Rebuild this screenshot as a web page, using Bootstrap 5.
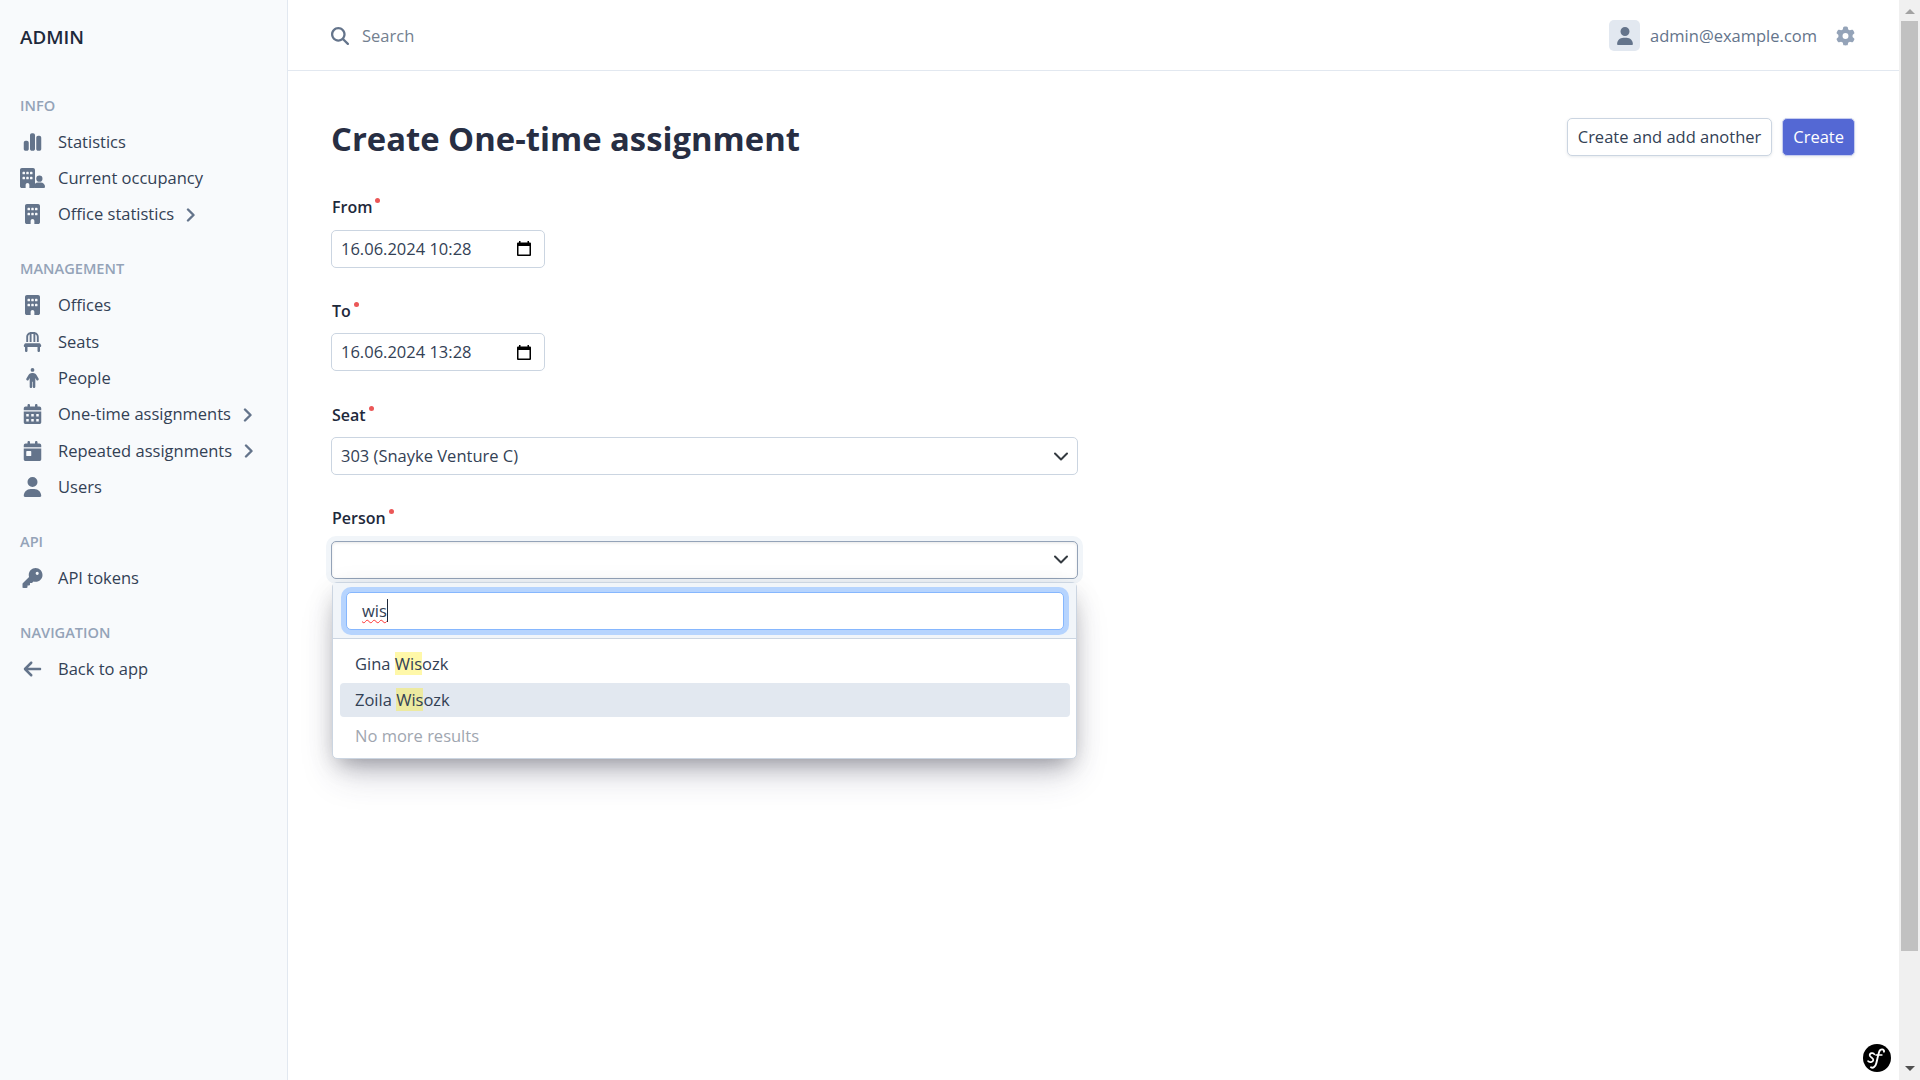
<!DOCTYPE html>
<html lang="en">
<head>
<meta charset="utf-8">
<meta name="viewport" content="width=device-width, initial-scale=1">
<title>Create One-time assignment</title>
<link rel="stylesheet" href="https://cdn.jsdelivr.net/npm/bootstrap@5.3.0/dist/css/bootstrap.min.css">
<style>
  html, body { height: 100%; overflow: hidden; }
  body { font-family: "Open Sans", "Noto Sans", sans-serif; font-size: 16.5px; line-height: 24px; color: #334155; background: #fff; }
  svg { display: block; flex: none; }
  .fa-ico { height: 20px; width: 25px; fill: #64748b; }
  .side { width: 288px; background: #f8fafc; border-right: 1px solid #e2e8f0; }
  .brand { height: 69px; padding: 5px 20px 0; font-size: 18.8px; font-weight: 600; color: #1e293b; }
  .side-head { height: 54.4px; padding: 17px 20px 0; font-size: 14.6px; font-weight: 600; color: #94a3b8; }
  .side-link { height: 36.4px; padding: 0 20px; color: #334155; text-decoration: none; }
  .side-link .lbl { margin-left: 13px; }
  .side-link .chev { width: 9px; height: 14px; margin: 1px 0 0 12px; fill: none; stroke: #64748b; stroke-width: 2.4; stroke-linecap: round; stroke-linejoin: round; }
  .topbar { height: 71px; border-bottom: 1px solid #e2e8f0; padding: 1px 44px 0 43px; color: #64748b; }
  .search-ph { margin-left: 13px; color: #73808f; }
  .mail { margin: 0 19px 0 10px; }
  .avatar { width: 31px; height: 31px; background: #e2e8f0; border-radius: 5px; }
  .page-body { padding: 47px 44px 0 43px; }
  .page-title { font-size: 32.8px; line-height: 42px; font-weight: 700; color: #272e43; }
  .btn-ea { height: 38px; padding: 0 10px; font-size: 16.5px; line-height: 36px; border-radius: 5px; box-shadow: 0 1px 3px rgba(100,116,139,.16); border: 1px solid #cbd5e1; color: #334155; background: #fff; }
  .btn-main { margin-left: 10px; background: #5468d4; color: #fff; border-color: #c6cdf0; }
  .ea-form { padding-top: 35px; }
  .fld { height: 103.75px; width: 747px; }
  .fld-label { height: 34.7px; padding-left: 1px; line-height: 24px; font-weight: 600; font-size: 16px; color: #1e293b; }
  .req { width: 5px; height: 5px; border-radius: 50%; background: #eb5757; margin: 3px 0 0 3px; }
  .ctl { height: 38px; border: 1px solid #cbd5e1; border-radius: 5px; padding: 0 9px; background: #fff; }
  .ctl-date { width: 214px; padding-right: 13px; }
  .ctl-open { border-color: #94a3b8; box-shadow: 0 0 0 5px #f1f5f9, inset 0 1px 3px rgba(0,0,0,.1); }
  .caret-dn { width: 14px; height: 9px; fill: none; stroke: #343a40; stroke-width: 2; stroke-linecap: round; stroke-linejoin: round; }
  .drop { top: 75.6px; left: 1px; width: 745px; height: 177px; border: 1px solid #cbd5e1; border-radius: 5px; background: #fff; box-shadow: 0 20px 34px -6px rgba(50,50,93,.22), 0 10px 20px -8px rgba(0,0,0,.3), 0 6px 30px rgba(0,0,0,.07); }
  .drop-top { height: 56px; background: #f1f5f9; border-bottom: 1px solid #cbd5e1; padding: 9px 12px 0 13px; }
  .drop-in { height: 38px; border: 1px solid #86b7fe; border-radius: 5px; background: #fff; box-shadow: 0 0 0 5px #b6d4fe; padding: 0 15px; }
  .spell { text-decoration: underline wavy #f33 1px; text-underline-offset: 2px; text-decoration-skip-ink: none; }
  .txt-caret { width: 1px; height: 23px; background: #1e293b; }
  .opt { height: 34px; margin: 2.4px 6px 0 7px; padding: 0 15px; border-radius: 4px; }
  .opt-first { margin-top: 8px; }
  .opt.sel { background: #e2e8f0; }
  .opt-end { margin-top: 1.6px; color: #a0a6b0; }
  .hl { background: rgba(255,237,40,.4); padding: 0; color: inherit; }
  .scr { width: 21px; background: #f0f0f0; }
  .scr-thumb { width: 17px; height: 930px; background: #c1c1c1; }
  .sf-mark { right: 8px; bottom: 8px; }
</style>
<script src="https://cdn.jsdelivr.net/npm/bootstrap@5.3.0/dist/js/bootstrap.bundle.min.js"></script>
</head>
<body class="d-flex">
<svg width="0" height="0" class="position-absolute">
  <symbol id="i-user" viewBox="0 0 448 512"><path d="M224 256A128 128 0 1 0 224 0a128 128 0 1 0 0 256zm-45.700 48C79.800 304 0 383.800 0 482.300C0 498.700 13.300 512 29.700 512H418.300c16.400 0 29.700-13.300 29.700-29.700C448 383.800 368.200 304 269.700 304H178.300z"/></symbol>
  <symbol id="i-building" viewBox="0 0 384 512"><path fill-rule="evenodd" d="M48 0h288c26.500 0 48 21.500 48 48v416c0 26.500-21.500 48-48 48h-96v-80c0-26.500-21.500-48-48-48s-48 21.500-48 48v80H48c-26.500 0-48-21.500-48-48V48C0 21.500 21.500 0 48 0zM80 96c-9 0-16 7-16 16v32c0 9 7 16 16 16h32c9 0 16-7 16-16v-32c0-9-7-16-16-16zM176 96c-9 0-16 7-16 16v32c0 9 7 16 16 16h32c9 0 16-7 16-16v-32c0-9-7-16-16-16zM272 96c-9 0-16 7-16 16v32c0 9 7 16 16 16h32c9 0 16-7 16-16v-32c0-9-7-16-16-16zM80 224c-9 0-16 7-16 16v32c0 9 7 16 16 16h32c9 0 16-7 16-16v-32c0-9-7-16-16-16zM176 224c-9 0-16 7-16 16v32c0 9 7 16 16 16h32c9 0 16-7 16-16v-32c0-9-7-16-16-16zM272 224c-9 0-16 7-16 16v32c0 9 7 16 16 16h32c9 0 16-7 16-16v-32c0-9-7-16-16-16z"/></symbol>
</svg>

<nav class="side d-flex flex-column flex-shrink-0 h-100">
  <div class="brand d-flex align-items-center"><span>ADMIN</span></div>
  <div class="side-head d-flex align-items-center"><span>INFO</span></div>
  <a href="#" class="side-link d-flex align-items-center"><svg class="fa-ico" viewBox="0 0 448 512"><path d="M160 80c0-26.500 21.500-48 48-48h32c26.500 0 48 21.500 48 48V432c0 26.500-21.500 48-48 48H208c-26.500 0-48-21.500-48-48V80zM0 272c0-26.500 21.500-48 48-48H80c26.500 0 48 21.500 48 48V432c0 26.500-21.500 48-48 48H48c-26.500 0-48-21.500-48-48V272zM368 96h32c26.500 0 48 21.500 48 48V432c0 26.500-21.500 48-48 48H368c-26.500 0-48-21.500-48-48V144c0-26.500 21.500-48 48-48z"/></svg><span class="lbl">Statistics</span></a>
  <a href="#" class="side-link d-flex align-items-center"><svg class="fa-ico" viewBox="0 0 640 512"><use href="#i-building" width="384" height="512"/><circle cx="496" cy="272" r="80"/><path d="M352 477c0-61 50-109 109-109h70c60 0 109 48 109 109 0 19-16 35-35 35H387c-19 0-35-16-35-35z"/></svg><span class="lbl">Current occupancy</span></a>
  <a href="#" class="side-link d-flex align-items-center"><svg class="fa-ico"><use href="#i-building"/></svg><span class="lbl">Office statistics</span><svg class="chev" viewBox="0 0 9 14"><path d="M2 1.500l5.500 5.500-5.500 5.500"/></svg></a>
  <div class="side-head d-flex align-items-center"><span>MANAGEMENT</span></div>
  <a href="#" class="side-link d-flex align-items-center"><svg class="fa-ico"><use href="#i-building"/></svg><span class="lbl">Offices</span></a>
  <a href="#" class="side-link d-flex align-items-center"><svg class="fa-ico" viewBox="0 0 448 512"><path d="M248 48V256h48V58.700c23.900 13.800 40 39.700 40 69.300V256h48V128C384 57.300 326.700 0 256 0H192C121.300 0 64 57.300 64 128V256h48V128c0-29.600 16.100-55.500 40-69.300V256h48V48h48zM48 288c-12.100 0-23.200 6.800-28.600 17.700l-16 32c-5 9.900-4.400 21.700 1.400 31.100S20.900 384 32 384l0 96c0 17.700 14.300 32 32 32s32-14.300 32-32V384H352v96c0 17.700 14.300 32 32 32s32-14.300 32-32V384c11.100 0 21.400-5.700 27.200-15.200s6.400-21.200 1.400-31.100l-16-32C423.200 294.800 412.100 288 400 288H48z"/></svg><span class="lbl">Seats</span></a>
  <a href="#" class="side-link d-flex align-items-center"><svg class="fa-ico" viewBox="0 0 320 512"><path d="M112 48a48 48 0 1 1 96 0 48 48 0 1 1 -96 0zm40 304V480c0 17.700-14.300 32-32 32s-32-14.300-32-32V256.900L59.400 304.500c-9.100 15.100-28.800 20-43.900 10.900s-20-28.800-10.900-43.900l58.300-97c17.400-28.900 48.600-46.600 82.300-46.600h29.700c33.700 0 64.900 17.700 82.300 46.600l58.300 97c9.100 15.100 4.200 34.800-10.900 43.900s-34.800 4.200-43.900-10.900L232 256.900V480c0 17.700-14.300 32-32 32s-32-14.300-32-32V352H152z"/></svg><span class="lbl">People</span></a>
  <a href="#" class="side-link d-flex align-items-center"><svg class="fa-ico" viewBox="0 0 448 512"><path fill-rule="evenodd" d="M128 0c17.700 0 32 14.300 32 32V64H288V32c0-17.700 14.300-32 32-32s32 14.300 32 32V64h48c26.500 0 48 21.500 48 48v48H0V112C0 85.500 21.500 64 48 64H96V32c0-17.700 14.300-32 32-32zM0 192H448V464c0 26.500-21.500 48-48 48H48c-26.500 0-48-21.500-48-48V192zM64 256v64h64v-64zM192 256v64h64v-64zM320 256v64h64v-64zM64 384v64h64v-64zM192 384v64h64v-64zM320 384v64h64v-64z"/></svg><span class="lbl">One-time assignments</span><svg class="chev" viewBox="0 0 9 14"><path d="M2 1.500l5.500 5.500-5.500 5.500"/></svg></a>
  <a href="#" class="side-link d-flex align-items-center"><svg class="fa-ico" viewBox="0 0 448 512"><path fill-rule="evenodd" d="M128 0c17.700 0 32 14.300 32 32V64H288V32c0-17.700 14.300-32 32-32s32 14.300 32 32V64h48c26.500 0 48 21.500 48 48v48H0V112C0 85.500 21.500 64 48 64H96V32c0-17.700 14.300-32 32-32zM0 192H448V464c0 26.500-21.500 48-48 48H48c-26.500 0-48-21.500-48-48V192zM80 256c-8.800 0-16 7.200-16 16v96c0 8.800 7.200 16 16 16h96c8.800 0 16-7.200 16-16V272c0-8.800-7.200-16-16-16H80z"/></svg><span class="lbl">Repeated assignments</span><svg class="chev" viewBox="0 0 9 14"><path d="M2 1.500l5.500 5.500-5.500 5.500"/></svg></a>
  <a href="#" class="side-link d-flex align-items-center"><svg class="fa-ico"><use href="#i-user"/></svg><span class="lbl">Users</span></a>
  <div class="side-head d-flex align-items-center"><span>API</span></div>
  <a href="#" class="side-link d-flex align-items-center"><svg class="fa-ico" viewBox="0 0 512 512"><path d="M336 352c97.200 0 176-78.800 176-176S433.200 0 336 0S160 78.800 160 176c0 18.700 2.900 36.800 8.300 53.700L7 391c-4.500 4.500-7 10.600-7 17v80c0 13.300 10.700 24 24 24h80c13.300 0 24-10.700 24-24V448h40c13.300 0 24-10.700 24-24V384h40c6.400 0 12.500-2.500 17-7l33.300-33.300c16.900 5.400 35 8.300 53.700 8.300zM376 96a40 40 0 1 1 0 80 40 40 0 1 1 0-80z"/></svg><span class="lbl">API tokens</span></a>
  <div class="side-head d-flex align-items-center"><span>NAVIGATION</span></div>
  <a href="#" class="side-link d-flex align-items-center"><svg class="fa-ico" viewBox="0 0 448 512"><path d="M9.400 233.400c-12.500 12.500-12.500 32.800 0 45.300l160 160c12.500 12.500 32.800 12.500 45.300 0s12.500-32.800 0-45.300L109.200 288 416 288c17.700 0 32-14.300 32-32s-14.300-32-32-32l-306.700 0L214.600 118.600c12.500-12.500 12.500-32.800 0-45.300s-32.800-12.500-45.300 0l-160 160z"/></svg><span class="lbl">Back to app</span></a>
</nav>

<main class="flex-grow-1 h-100 position-relative">
  <header class="topbar d-flex align-items-center justify-content-between">
    <div class="d-flex align-items-center">
      <svg width="18" height="18" viewBox="0 0 512 512" fill="#64748b"><path d="M416 208c0 45.900-14.900 88.300-40 122.700L502.600 457.400c12.500 12.500 12.500 32.800 0 45.300s-32.800 12.500-45.300 0L330.700 376c-34.400 25.200-76.800 40-122.700 40C93.100 416 0 322.900 0 208S93.100 0 208 0S416 93.100 416 208zM208 352a144 144 0 1 0 0-288 144 144 0 1 0 0 288z"/></svg>
      <span class="search-ph">Search</span>
    </div>
    <div class="d-flex align-items-center">
      <div class="avatar d-flex align-items-center justify-content-center"><svg width="16" height="18" fill="#64748b"><use href="#i-user"/></svg></div>
      <span class="mail">admin@example.com</span>
      <svg width="19" height="20" viewBox="0 0 512 512" fill="#94a3b8"><path d="M495.900 166.600c3.200 8.700 .5 18.400-6.400 24.600l-43.300 39.400c1.100 8.300 1.700 16.800 1.700 25.400s-.6 17.100-1.700 25.400l43.300 39.400c6.900 6.200 9.600 15.900 6.400 24.600c-4.400 11.900-9.700 23.300-15.800 34.300l-4.700 8.100c-6.600 11-14 21.400-22.100 31.200c-5.900 7.200-15.700 9.600-24.500 6.800l-55.700-17.700c-13.400 10.300-28.200 18.900-44 25.400l-12.500 57.100c-2 9.100-9 16.300-18.200 17.800c-13.800 2.300-28 3.500-42.500 3.500s-28.700-1.200-42.500-3.500c-9.200-1.500-16.200-8.700-18.200-17.800l-12.500-57.100c-15.800-6.500-30.600-15.100-44-25.400L83.100 425.900c-8.800 2.800-18.600 .3-24.500-6.800c-8.100-9.800-15.500-20.200-22.100-31.200l-4.700-8.100c-6.100-11-11.400-22.400-15.800-34.300c-3.200-8.700-.5-18.400 6.400-24.600l43.300-39.400C64.600 273.100 64 264.600 64 256s.6-17.100 1.700-25.400L22.400 191.200c-6.900-6.200-9.600-15.900-6.400-24.600c4.400-11.900 9.700-23.300 15.800-34.300l4.700-8.100c6.600-11 14-21.400 22.100-31.200c5.900-7.200 15.700-9.600 24.500-6.800l55.700 17.700c13.400-10.300 28.200-18.900 44-25.400l12.500-57.100c2-9.100 9-16.300 18.200-17.800C227.300 1.200 241.500 0 256 0s28.700 1.200 42.500 3.500c9.200 1.500 16.200 8.700 18.200 17.800l12.500 57.100c15.800 6.500 30.600 15.100 44 25.400l55.700-17.700c8.800-2.800 18.600-.3 24.500 6.800c8.100 9.800 15.500 20.200 22.100 31.200l4.700 8.100c6.100 11 11.400 22.400 15.800 34.300zM256 336a80 80 0 1 0 0-160 80 80 0 1 0 0 160z"/></svg>
    </div>
  </header>

  <div class="page-body">
    <div class="d-flex justify-content-between">
      <h1 class="page-title m-0">Create One-time assignment</h1>
      <div class="d-flex">
        <button class="btn btn-ea">Create and add another</button>
        <button class="btn btn-ea btn-main">Create</button>
      </div>
    </div>

    <form class="ea-form">
      <div class="fld">
        <div class="fld-label d-flex"><span>From</span><i class="req"></i></div>
        <div class="ctl ctl-date d-flex align-items-center justify-content-between"><span>16.06.2024 10:28</span><svg width="14" height="15" viewBox="0 0 14 15"><path fill-rule="evenodd" d="M2 0h1.500v1.500h7V0H12v1.500h1a1 1 0 0 1 1 1V14a1 1 0 0 1-1 1H1a1 1 0 0 1-1-1V2.500a1 1 0 0 1 1-1h1zM1.500 5v8.500h11V5z"/></svg></div>
      </div>
      <div class="fld">
        <div class="fld-label d-flex"><span>To</span><i class="req"></i></div>
        <div class="ctl ctl-date d-flex align-items-center justify-content-between"><span>16.06.2024 13:28</span><svg width="14" height="15" viewBox="0 0 14 15"><path fill-rule="evenodd" d="M2 0h1.500v1.500h7V0H12v1.500h1a1 1 0 0 1 1 1V14a1 1 0 0 1-1 1H1a1 1 0 0 1-1-1V2.500a1 1 0 0 1 1-1h1zM1.500 5v8.500h11V5z"/></svg></div>
      </div>
      <div class="fld">
        <div class="fld-label d-flex"><span>Seat</span><i class="req"></i></div>
        <div class="ctl d-flex align-items-center justify-content-between"><span>303 (Snayke Venture C)</span><svg class="caret-dn" viewBox="0 0 14 9"><path d="M1 1.500l6 6 6-6"/></svg></div>
      </div>
      <div class="fld position-relative">
        <div class="fld-label d-flex"><span>Person</span><i class="req"></i></div>
        <div class="ctl ctl-open d-flex align-items-center justify-content-end"><svg class="caret-dn" viewBox="0 0 14 9"><path d="M1 1.500l6 6 6-6"/></svg></div>
        <div class="drop position-absolute">
          <div class="drop-top"><div class="drop-in d-flex align-items-center"><span class="spell">wis</span><i class="txt-caret"></i></div></div>
          <div class="opt opt-first d-flex align-items-center"><div>Gina <mark class="hl">Wis</mark>ozk</div></div>
          <div class="opt sel d-flex align-items-center"><div>Zoila <mark class="hl">Wis</mark>ozk</div></div>
          <div class="opt opt-end d-flex align-items-center"><span>No more results</span></div>
        </div>
      </div>
    </form>
  </div>

  <svg class="sf-mark position-absolute" width="28" height="28" viewBox="0 0 28 28"><circle cx="14" cy="14" r="14"/><g fill="none" stroke="#fff" stroke-linecap="round"><path stroke-width="1.700" d="M11.300 10.300C10.500 8.300 6.600 8.800 6.700 11.300c.1 2.300 4 2.400 3.600 4.900-.3 2.200-4 2.600-5.300.9"/><path stroke-width="1.900" d="M21 7.700c.5-2.700-3.700-3.500-4.900.3-1.100 3.300-1.700 7-2.800 11.200-.8 3.200-3.300 5.500-5.300 4"/><path stroke-width="1.300" d="M12.800 11h6.200"/></g></svg>
</main>

<aside class="scr d-flex flex-column align-items-center justify-content-between flex-shrink-0 h-100">
  <svg width="21" height="21"><path d="M6 14l5-5 5 5z" fill="#a3a3a3"/></svg>
  <div class="scr-thumb"></div>
  <svg class="mt-auto" width="21" height="21"><path d="M6 7l5 5 5-5z" fill="#505050"/></svg>
</aside>
</body>
</html>
